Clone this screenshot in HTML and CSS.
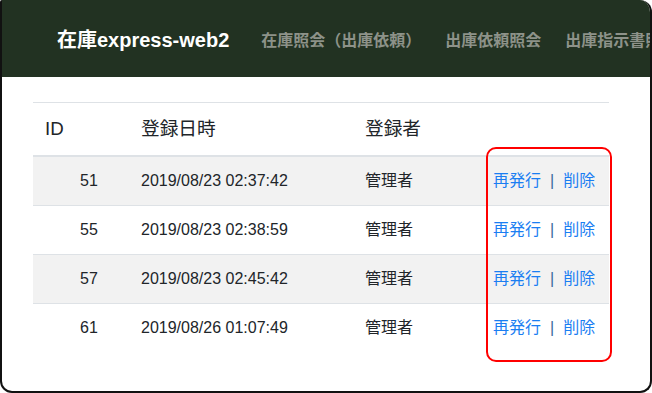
FILE: index.html
```html
<!DOCTYPE html>
<html lang="ja">
<head>
  <meta charset="UTF-8" />
  <title>出庫指示書 | 在庫express-web2</title>
  <link rel="stylesheet" href="styles.css">
</head>
<body>
  <div class="window">
    <nav class="navbar">
      <a class="brand" href="#">在庫express-web2</a>
      <a class="nav-link" href="#">在庫照会（出庫依頼）</a>
      <a class="nav-link" href="#">出庫依頼照会</a>
      <a class="nav-link" href="#">出庫指示書照会</a>
    </nav>

    <div class="content">
      <table class="table">
        <colgroup>
          <col class="col-id">
          <col class="col-date">
          <col class="col-user">
          <col class="col-action">
        </colgroup>
        <thead>
          <tr>
            <th>ID</th>
            <th>登録日時</th>
            <th>登録者</th>
            <th></th>
          </tr>
        </thead>
        <tbody>
          <tr class="striped">
            <td class="id">51</td>
            <td>2019/08/23 02:37:42</td>
            <td>管理者</td>
            <td><a href="#">再発行</a><span class="sep">|</span><a href="#">削除</a></td>
          </tr>
          <tr>
            <td class="id">55</td>
            <td>2019/08/23 02:38:59</td>
            <td>管理者</td>
            <td><a href="#">再発行</a><span class="sep">|</span><a href="#">削除</a></td>
          </tr>
          <tr class="striped">
            <td class="id">57</td>
            <td>2019/08/23 02:45:42</td>
            <td>管理者</td>
            <td><a href="#">再発行</a><span class="sep">|</span><a href="#">削除</a></td>
          </tr>
          <tr>
            <td class="id">61</td>
            <td>2019/08/26 01:07:49</td>
            <td>管理者</td>
            <td><a href="#">再発行</a><span class="sep">|</span><a href="#">削除</a></td>
          </tr>
        </tbody>
      </table>
    </div>

    <!-- annotation around the action column -->
    <div class="highlight"></div>
  </div>
</body>
</html>
```

FILE: styles.css
```css
body {
  margin: 0;
  padding: 0;
  background-color: #fff;
  font-family: 'Liberation Sans', 'Noto Sans CJK JP', sans-serif;
  color: #212529;
}

.window {
  position: relative;
  width: 652px;
  height: 393px;
  box-sizing: border-box;
  border: 2px solid #111;
  border-top: none;
  border-radius: 2px 12px 12px 12px;
  overflow: hidden;
  background: #fff;
}

.navbar {
  display: flex;
  align-items: center;
  height: 77px;
  padding-left: 55px;
  background-color: #223222;
  white-space: nowrap;
}

.brand {
  font-size: 20px;
  font-weight: bold;
  color: #fff;
  text-decoration: none;
  margin-right: 20px;
}

.nav-link {
  font-size: 16px;
  font-weight: bold;
  color: #8d9289;
  text-decoration: none;
  padding: 0 12px;
}

.content {
  padding: 25px 0 0 31px;
}

.table {
  width: 576px;
  table-layout: fixed;
  border-collapse: collapse;
}

.col-id { width: 96px; }
.col-date { width: 224px; }
.col-user { width: 128px; }
.col-action { width: 128px; }

.table th {
  text-align: left;
  font-weight: normal;
  font-size: 18.7px;
  line-height: 28px;
  padding: 12px;
  border-top: 1px solid #dee2e6;
  border-bottom: 2px solid #dee2e6;
}

.table td {
  font-size: 16px;
  line-height: 24px;
  padding: 12px;
  border-top: 1px solid #dee2e6;
  white-space: nowrap;
}

.table td.id {
  padding-left: 47px;
}

.striped td {
  background-color: #f2f2f2;
}

.table a {
  color: #1a7ef2;
  text-decoration: none;
}

.sep {
  color: #3b6a9a;
  margin: 0 9px;
}

.highlight {
  position: absolute;
  left: 484px;
  top: 147px;
  width: 126px;
  height: 215px;
  box-sizing: border-box;
  border: 2px solid #f00;
  border-radius: 10px;
}
```
